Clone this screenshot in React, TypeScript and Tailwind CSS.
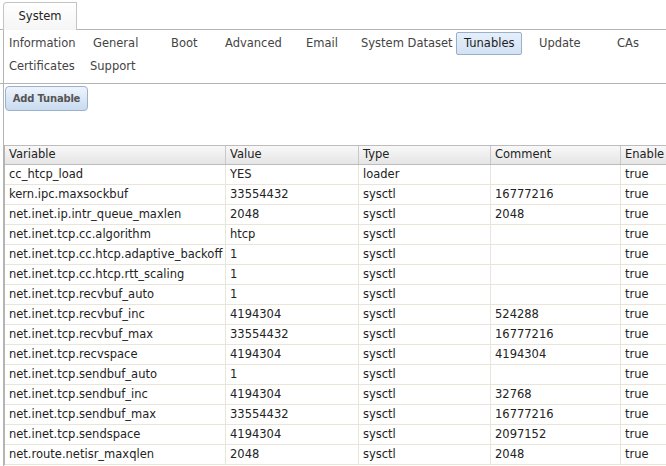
const navRow1 = [
  { label: "Information", w: "w-[84px]" },
  { label: "General", w: "w-[78px]" },
  { label: "Boot", w: "w-[54px]" },
  { label: "Advanced", w: "w-[81px]" },
  { label: "Email", w: "w-[55px]" },
  { label: "System Dataset", w: "w-[102px]" },
  { label: "Tunables", w: "w-[76px]", active: true },
  { label: "Update", w: "w-[78px]" },
  { label: "CAs", w: "w-[52px]" },
];

const navRow2 = [
  { label: "Certificates", w: "w-[81px]" },
  { label: "Support", w: "w-[80px]" },
];

const rows: [string, string, string, string, string][] = [
  ["cc_htcp_load", "YES", "loader", "", "true"],
  ["kern.ipc.maxsockbuf", "33554432", "sysctl", "16777216", "true"],
  ["net.inet.ip.intr_queue_maxlen", "2048", "sysctl", "2048", "true"],
  ["net.inet.tcp.cc.algorithm", "htcp", "sysctl", "", "true"],
  ["net.inet.tcp.cc.htcp.adaptive_backoff", "1", "sysctl", "", "true"],
  ["net.inet.tcp.cc.htcp.rtt_scaling", "1", "sysctl", "", "true"],
  ["net.inet.tcp.recvbuf_auto", "1", "sysctl", "", "true"],
  ["net.inet.tcp.recvbuf_inc", "4194304", "sysctl", "524288", "true"],
  ["net.inet.tcp.recvbuf_max", "33554432", "sysctl", "16777216", "true"],
  ["net.inet.tcp.recvspace", "4194304", "sysctl", "4194304", "true"],
  ["net.inet.tcp.sendbuf_auto", "1", "sysctl", "", "true"],
  ["net.inet.tcp.sendbuf_inc", "4194304", "sysctl", "32768", "true"],
  ["net.inet.tcp.sendbuf_max", "33554432", "sysctl", "16777216", "true"],
  ["net.inet.tcp.sendspace", "4194304", "sysctl", "2097152", "true"],
  ["net.route.netisr_maxqlen", "2048", "sysctl", "2048", "true"],
];

const cols = [
  { label: "Variable", w: "w-[220px]" },
  { label: "Value", w: "w-[133px]" },
  { label: "Type", w: "w-[132px]" },
  { label: "Comment", w: "w-[130px]" },
  { label: "Enable", w: "w-[60px]" },
];

function NavItem({ label, w, active }: { label: string; w: string; active?: boolean }) {
  return (
    <div className={`${w} h-[23px] flex items-center shrink-0`}>
      {active ? (
        <span className="h-[23px] px-[7px] flex items-center border border-[#98b0cc] rounded-[2px] bg-gradient-to-b from-[#e6effa] to-[#d2e2f4] text-[#222]">
          {label}
        </span>
      ) : (
        <span className="pl-[7px] text-[#444] whitespace-nowrap">{label}</span>
      )}
    </div>
  );
}

export default function App() {
  return (
    <div
      className="w-[666px] h-[466px] overflow-hidden bg-white text-[11.5px] text-[#222]"
      style={{ fontFamily: '"DejaVu Sans", Verdana, sans-serif' }}
    >
      {/* tab strip */}
      <div className="flex items-end h-[30px] pt-[2px]">
        <div className="w-[3px] h-full border-b border-[#b4b4b4]" />
        <div className="w-[74px] h-[28px] border border-b-0 border-[#c4c4c4] rounded-tl-[4px] bg-gradient-to-b from-white to-[#f5f5f5] flex items-center justify-center text-[#222]">
          System
        </div>
        <div className="flex-1 h-full border-b border-[#b4b4b4]" />
      </div>

      <div className="ml-[3px] border-l border-[#b4b4b4] h-full">
        {/* sub navigation */}
        <div className="pt-[2px] pb-[5px] border-b border-[#b4b4b4] -ml-[4px] pl-[2px]">
          <div className="flex">
            {navRow1.map((n) => (
              <NavItem key={n.label} {...n} />
            ))}
          </div>
          <div className="flex">
            {navRow2.map((n) => (
              <NavItem key={n.label} {...n} />
            ))}
          </div>
        </div>

        {/* toolbar */}
        <div className="pt-[2px] pl-[1px]">
          <button className="w-[83px] h-[25px] rounded-[4px] border border-[#9ab0cc] bg-gradient-to-b from-[#eef4fc] to-[#c8dbef] text-[10px] tracking-[-0.2px] font-bold text-[#555]">
            Add Tunable
          </button>
        </div>

        {/* grid */}
        <div className="mt-[34px] border-l border-[#b4b4b4]">
          <div className="flex h-[20px] border-t border-b border-[#bcbcbc] bg-gradient-to-b from-[#f8f8f8] to-[#e5e5e5]">
            {cols.map((c, i) => (
              <div
                key={c.label}
                className={`${c.w} shrink-0 pl-[4px] flex items-center whitespace-nowrap overflow-hidden ${i > 0 ? "border-l border-[#c8c8c8]" : ""}`}
              >
                {c.label}
              </div>
            ))}
          </div>
          {rows.map((r) => (
            <div key={r[0]} className="flex h-[20px] border-b border-[#e9e5d8]">
              {r.map((v, i) => (
                <div
                  key={i}
                  className={`${cols[i].w} shrink-0 pl-[4px] flex items-center whitespace-nowrap overflow-hidden ${i > 0 ? "border-l border-[#e9e5d8]" : ""}`}
                >
                  {v}
                </div>
              ))}
            </div>
          ))}
        </div>
      </div>
    </div>
  );
}
